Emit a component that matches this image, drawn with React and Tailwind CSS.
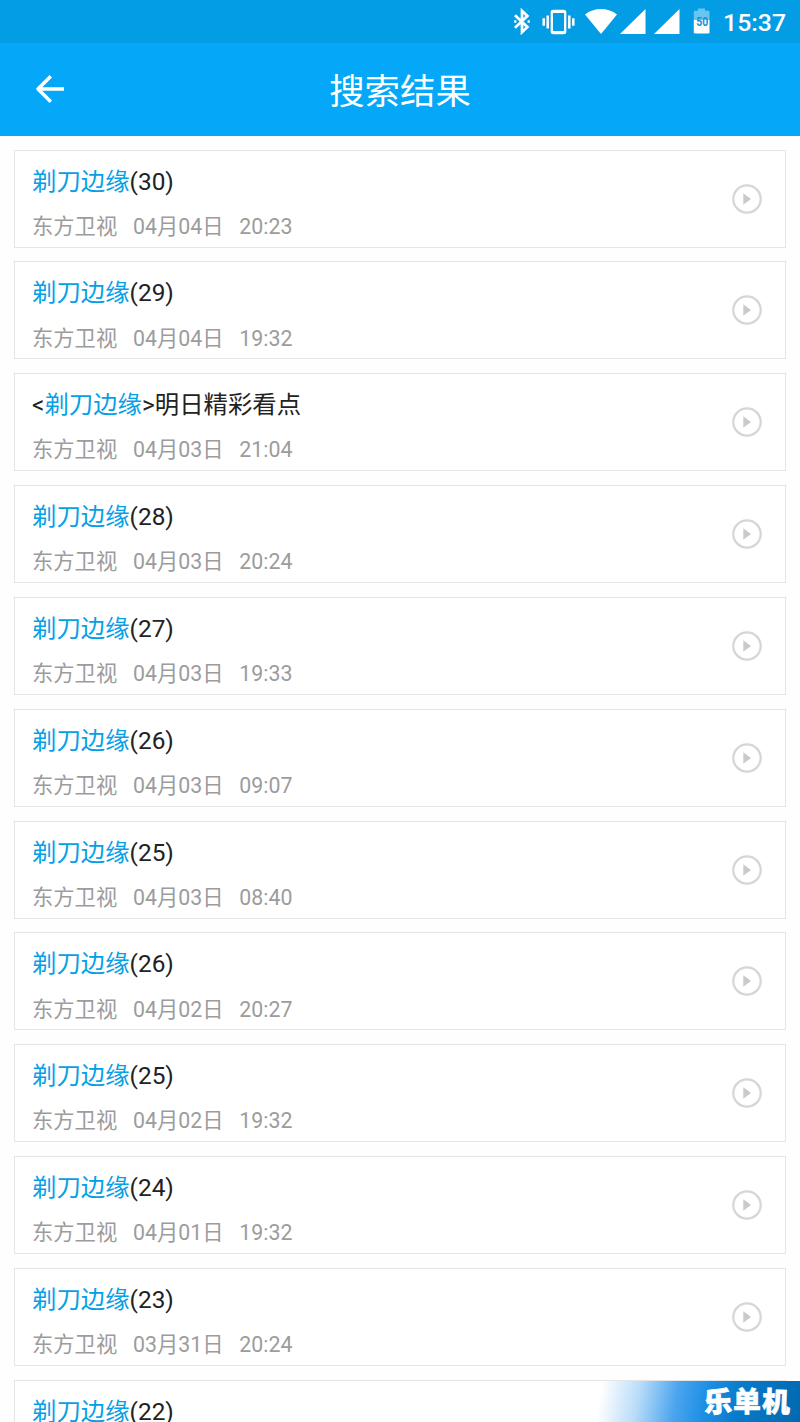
const KEYWORD = '剃刀边缘';

const results = [
  { after: '(30)', date: '04月04日', time: '20:23' },
  { after: '(29)', date: '04月04日', time: '19:32' },
  { before: '<', after: '>明日精彩看点', date: '04月03日', time: '21:04' },
  { after: '(28)', date: '04月03日', time: '20:24' },
  { after: '(27)', date: '04月03日', time: '19:33' },
  { after: '(26)', date: '04月03日', time: '09:07' },
  { after: '(25)', date: '04月03日', time: '08:40' },
  { after: '(26)', date: '04月02日', time: '20:27' },
  { after: '(25)', date: '04月02日', time: '19:32' },
  { after: '(24)', date: '04月01日', time: '19:32' },
  { after: '(23)', date: '03月31日', time: '20:24' },
  { after: '(22)' },
];

function StatusBar() {
  return (
    <div className="flex h-[43px] shrink-0 items-start justify-end bg-[#039de6] pr-[14px] text-white">
      <svg className="mt-[8px] mr-[11px] h-[27px] w-[18px]" viewBox="0 0 18 27" fill="none" stroke="currentColor" strokeWidth="2.7">
        <path d="M2 7.3 14.4 19.1 9 24.2V2.8l5.4 5.1L2 19.7" />
        <path d="M1.2 13.5h2.2M14.6 13.5h2.2" strokeWidth="2.6" />
      </svg>
      <svg className="mt-[8px] mr-[10px] h-[27px] w-[33px]" viewBox="0 0 33 27" fill="none" stroke="currentColor">
        <rect x="9.8" y="3" width="13.4" height="22" rx="1.6" strokeWidth="2.3" />
        <path d="M9.8 3.6h13.4M9.8 24.4h13.4" strokeWidth="3" />
        <path d="M1.7 10.2v7.6M5.7 7.5v13M27.3 7.5v13M31.3 10.2v7.6" strokeWidth="2.5" />
      </svg>
      <svg className="mt-[8px] mr-[3px] h-[27px] w-[32px]" viewBox="0 0 32 27" fill="currentColor">
        <path d="M0 6.5C9 -.9 23 -.9 32 6.5L16 26z" />
      </svg>
      <svg className="mt-[9px] mr-[8px] h-[25px] w-[26px]" viewBox="0 0 26 25" fill="currentColor">
        <path d="M0 25 25.5 0V25z" />
      </svg>
      <svg className="mt-[9px] mr-[13px] h-[25px] w-[26px]" viewBox="0 0 26 25" fill="currentColor">
        <path d="M0 25 25.5 0V25z" />
      </svg>
      <svg className="mt-[8px] mr-[12px] h-[26px] w-[18px]" viewBox="0 0 18 26">
        <path d="M5 .5h7v2.3h3.2q1.3 0 1.3 1.3V12H.8V4.1q0-1.3 1.3-1.3H5z" fill="#68c4f0" />
        <path d="M.8 12h15.7v12.2q0 1.3-1.3 1.3H2.1q-1.3 0-1.3-1.3z" fill="#fff" />
        <text x="3.2" y="17.9" textLength="12" lengthAdjust="spacingAndGlyphs" fontFamily="Roboto, sans-serif" fontWeight="700" fontSize="12.5" fill="#1592d2">50</text>
      </svg>
      <span className="mt-[8px] text-[24.8px] leading-[29px] font-medium">15:37</span>
    </div>
  );
}

function Header() {
  return (
    <header className="grid h-[92.5px] shrink-0 grid-cols-[1fr_auto_1fr] items-center bg-[#05a8f8] text-white">
      <button aria-label="返回" className="ml-[35px] w-[30px]">
        <svg className="h-[30px] w-[30px]" viewBox="0 0 30 30" fill="none" stroke="currentColor" strokeWidth="3.5">
          <path d="M29 15H3.5M15.8 2.2 3 15l12.8 12.8" strokeLinejoin="round" />
        </svg>
      </button>
      <h1 className="pt-[5px] text-[35.4px] leading-[42px] font-normal">搜索结果</h1>
    </header>
  );
}

function PlayIcon() {
  return (
    <svg className="h-[30px] w-[30px] shrink-0" viewBox="0 0 30 30">
      <circle cx="15" cy="15" r="13.7" fill="none" stroke="#d6d6d6" strokeWidth="2.3" />
      <path d="M11.3 9.3v11.4L19 15z" fill="#cacaca" />
    </svg>
  );
}

function ResultCard({ before, after, date, time }) {
  return (
    <li className="flex h-[98px] shrink-0 items-center justify-between border border-[#e5e5e5] bg-white pr-[23.5px] pl-[17px]">
      <div className="flex h-full flex-col whitespace-pre">
        <p className="mt-[15px] h-[32px] text-[24.4px] leading-[32px] text-[#222]">
          {before}
          <span className="text-[#06a0e6]">{KEYWORD}</span>
          {after}
        </p>
        {date && (
          <p className="mt-[15.2px] h-[28px] text-[21.3px] leading-[28px] text-[#9c9c9c]">{`东方卫视   ${date}   ${time}`}</p>
        )}
      </div>
      <PlayIcon />
    </li>
  );
}

function Watermark() {
  return (
    <div className="absolute right-0 bottom-0 flex h-[41px] w-[206px] items-center justify-end bg-[linear-gradient(100deg,#ffffff00_4%,#b9dcf8_22%,#4ba5ee_40%,#2090e6_53%,#087ac9_70%,#0169b1_100%)] pt-[3px] pr-[10px] text-[28px] leading-[38px] font-black text-white">
      <span className="-rotate-3 [-webkit-text-stroke:0.8px_white]">乐</span>
      <span className="ml-[1px] [-webkit-text-stroke:0.4px_white]">单</span>
      <span className="ml-[1px] rotate-2 [-webkit-text-stroke:0.6px_white]">机</span>
    </div>
  );
}

export default function App() {
  return (
    <div className="relative flex h-[1422px] w-[800px] flex-col overflow-hidden bg-[#fefefe] font-['Roboto','Noto_Sans_CJK_SC',sans-serif]">
      <StatusBar />
      <Header />
      <ul className="flex min-h-0 flex-1 flex-col gap-[13.85px] overflow-hidden px-[14px] pt-[14px]">
        {results.map((item, i) => (
          <ResultCard key={i} {...item} />
        ))}
      </ul>
      <Watermark />
    </div>
  );
}
